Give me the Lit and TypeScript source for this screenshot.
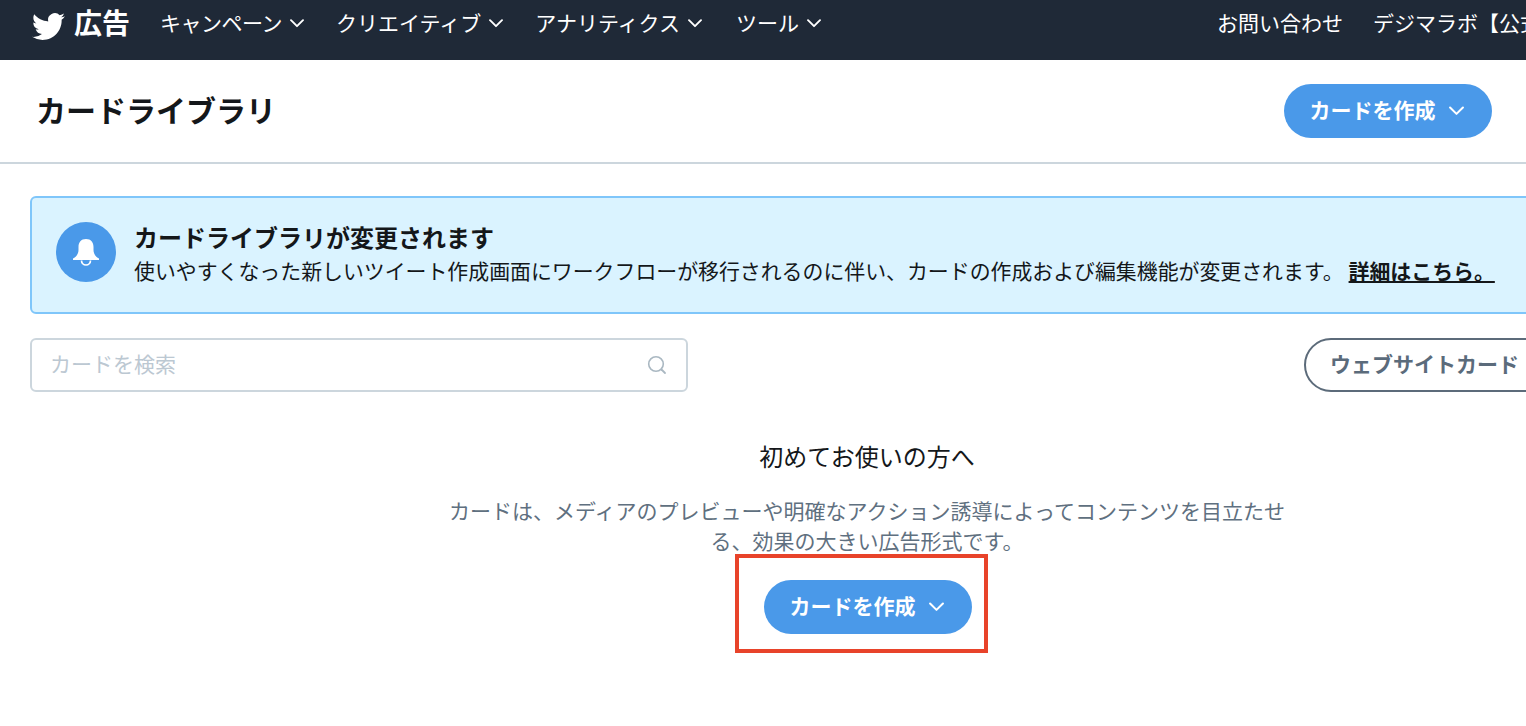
import { css, html, LitElement } from "lit";
import { customElement } from "lit/decorators.js";

const caret = html`<svg class="caret" viewBox="0 0 14 9" width="14" height="9"><path d="M1 1.200 7 7.200l6-6" fill="none" stroke="currentColor" stroke-width="1.900" stroke-linecap="round" stroke-linejoin="round"/></svg>`;

const bird = html`<svg class="bird" viewBox="0 0 24 24" width="33" height="33"><path fill="currentColor" d="M23.95 4.57a10 10 0 0 1-2.82.77 4.96 4.96 0 0 0 2.16-2.72c-.95.55-2 .96-3.12 1.19a4.92 4.92 0 0 0-8.38 4.48C7.69 8.1 4.07 6.13 1.64 3.16a4.82 4.82 0 0 0-.67 2.48c0 1.71.87 3.21 2.19 4.1a4.9 4.9 0 0 1-2.23-.62v.06a4.92 4.92 0 0 0 3.95 4.83 4.99 4.99 0 0 1-2.21.08 4.94 4.94 0 0 0 4.6 3.42A9.87 9.87 0 0 1 0 19.54a14 14 0 0 0 7.56 2.21c9.05 0 14-7.5 14-13.98 0-.21 0-.42-.02-.63a9.94 9.94 0 0 0 2.41-2.56z"/></svg>`;

@customElement("app-root")
export class AppRoot extends LitElement {
  render() {
    const nav = ["キャンペーン", "クリエイティブ", "アナリティクス", "ツール"];
    return html`
      <nav class="topbar">
        <div class="brand">${bird}<span>広告</span></div>
        <div class="menu">
          ${nav.map((n) => html`<span class="menu-item">${n}${caret}</span>`)}
        </div>
        <div class="right">
          <span>お問い合わせ</span>
          <span class="account">デジマラボ【公式】</span>
        </div>
      </nav>

      <header class="page-head">
        <h1>カードライブラリ</h1>
        <button class="primary">カードを作成${caret}</button>
      </header>

      <main class="content">
        <section class="notice">
          <div class="notice-icon">
            <svg viewBox="0 0 26 27" width="26" height="27">
              <path fill="#fff" d="M13 0C8 0 5.500 3.500 5.500 8v3C5.500 15 3 18 0 19.500V21h26v-1.500C23 18 20.500 15 20.500 11V8C20.500 3.500 18 0 13 0z"/>
              <path fill="none" stroke="#fff" stroke-width="1.700" d="M8.500 21.500a4.500 4.500 0 0 0 9 0"/>
            </svg>
          </div>
          <div class="notice-body">
            <strong>カードライブラリが変更されます</strong>
            <p>使いやすくなった新しいツイート作成画面にワークフローが移行されるのに伴い、カードの作成および編集機能が変更されます。<a>詳細はこちら。</a></p>
          </div>
        </section>

        <div class="filters">
          <div class="search">
            <span>カードを検索</span>
            <svg viewBox="0 0 20 20" width="20" height="20"><circle cx="9" cy="9" r="7.300" fill="none" stroke="#aab8c2" stroke-width="1.600"/><path d="m14.500 14.500 3.500 3.500" stroke="#aab8c2" stroke-width="1.800" stroke-linecap="round"/></svg>
          </div>
          <button class="outline"><span>ウェブサイトカード</span></button>
        </div>

        <section class="empty">
          <h2>初めてお使いの方へ</h2>
          <p>カードは、メディアのプレビューや明確なアクション誘導によってコンテンツを目立たせる、効果の大きい広告形式です。</p>
          <div class="cta">
            <button class="primary">カードを作成${caret}</button>
            <div class="annotation"></div>
          </div>
        </section>
      </main>
    `;
  }

  static styles = css`
    :host {
      display: block;
      width: 1526px;
      height: 726px;
      overflow: hidden;
      background: #fff;
      font-family: "Noto Sans CJK JP", "Liberation Sans", sans-serif;
      color: #14171a;
    }
    .topbar {
      height: 60px;
      box-sizing: border-box;
      padding: 0 0 16px 32px;
      display: flex;
      align-items: center;
      background: #1f2937;
      color: #fff;
      white-space: nowrap;
      font-size: 21px;
    }
    .brand {
      display: flex;
      align-items: center;
      gap: 9px;
      font-size: 28px;
      font-weight: 700;
    }
    .bird {
      margin-top: 9px;
    }
    .menu {
      display: flex;
      gap: 32px;
      margin-left: 30px;
    }
    .menu-item {
      display: flex;
      align-items: center;
      gap: 8px;
    }
    .menu-item:first-child {
      letter-spacing: -0.5px;
    }
    .menu-item:nth-child(3) {
      margin-right: 2px;
    }
    .right {
      display: flex;
      gap: 30px;
      margin-left: auto;
      width: 309px;
      flex: none;
    }
    .caret {
      flex: none;
      margin-top: 3px;
    }
    .page-head {
      height: 102px;
      padding: 0 34px 0 36px;
      display: flex;
      align-items: center;
      justify-content: space-between;
      border-bottom: 2px solid #ccd6dd;
    }
    h1 {
      margin: -5px 0 0;
      font-size: 30px;
      font-weight: 700;
    }
    button {
      font: inherit;
      font-weight: 700;
      font-size: 21px;
      box-sizing: border-box;
      height: 54px;
      white-space: nowrap;
    }
    .primary {
      width: 208px;
      border: 0;
      border-radius: 27px;
      background: #4a99e9;
      color: #fff;
      display: flex;
      align-items: center;
      justify-content: center;
      gap: 13px;
      padding: 0 3px 4px 0;
    }
    .primary .caret {
      width: 15px;
      height: 10px;
    }
    .content {
      padding: 32px 0 0 30px;
    }
    .notice {
      width: 1600px;
      height: 118px;
      box-sizing: border-box;
      border: 2px solid #7fc6fa;
      border-radius: 6px;
      background: #daf3ff;
      display: flex;
      padding: 24px;
      gap: 18px;
    }
    .notice-icon {
      width: 60px;
      height: 60px;
      border-radius: 50%;
      background: #4a99e9;
      display: flex;
      align-items: center;
      justify-content: center;
      flex: none;
    }
    .notice-body {
      white-space: nowrap;
      margin-top: -1px;
    }
    .notice-body strong {
      display: block;
      font-size: 24px;
      line-height: 32px;
    }
    .notice-body p {
      margin: 2px 0 0;
      font-size: 20.900px;
      line-height: 30px;
    }
    .notice-body a {
      margin-left: 5px;
      font-weight: 700;
      text-decoration: underline;
      color: #14171a;
    }
    .filters {
      display: flex;
      justify-content: space-between;
      margin-top: 24px;
      width: 1600px;
    }
    .search {
      width: 658px;
      height: 54px;
      box-sizing: border-box;
      border: 2px solid #ccd6dd;
      border-radius: 6px;
      display: flex;
      align-items: center;
      justify-content: space-between;
      padding: 0 19px 0 18px;
      color: #bcc8d2;
      font-size: 21px;
    }
    .search span {
      margin-top: -4px;
    }
    .outline {
      width: 326px;
      border: 2px solid #5c6b7a;
      border-radius: 27px;
      background: #fff;
      color: #5b6b7b;
      text-align: left;
      padding: 0 0 4px 24px;
    }
    .empty {
      width: 836px;
      margin: 44px 0 0 419px;
      text-align: center;
    }
    h2 {
      margin: 0;
      font-size: 24px;
      font-weight: 400;
      line-height: 40px;
    }
    .empty p {
      margin: 19px 0 0;
      font-size: 21px;
      line-height: 30px;
      color: #5f7080;
    }
    .cta {
      position: relative;
      width: 208px;
      margin: 25px 0 0 315px;
    }
    .annotation {
      position: absolute;
      inset: -26px -16px -19px -29px;
      border: 4px solid #e8432a;
      pointer-events: none;
    }
  `;
}
